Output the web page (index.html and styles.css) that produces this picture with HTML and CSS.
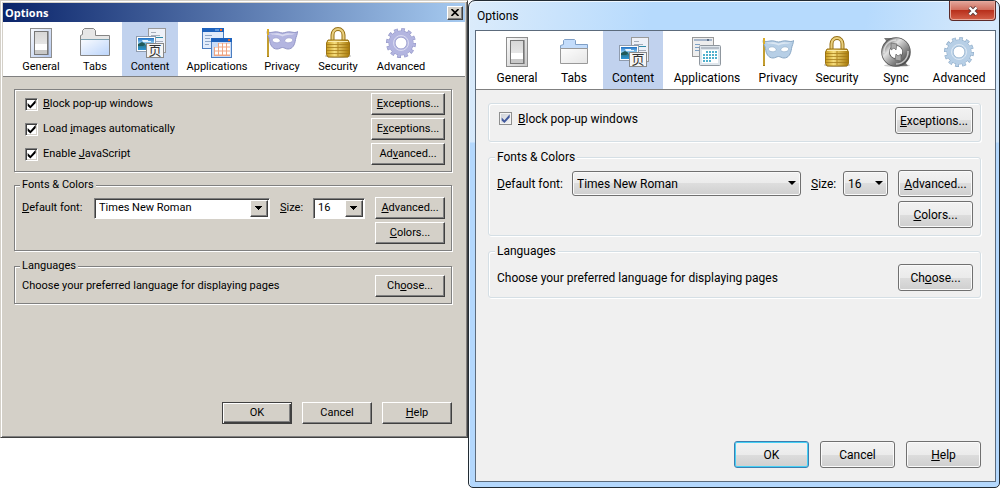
FILE: index.html
```html
<!DOCTYPE html>
<html lang="en">
<head>
    <meta charset="UTF-8">
    <meta name="viewport" content="width=device-width, initial-scale=1.0">
    <title>Options</title>
    <link rel="stylesheet" href="styles.css">
</head>
<body>

<!-- Shared icons, coloured per theme through CSS variables -->
<svg class="sprite" width="0" height="0" aria-hidden="true">
    <defs>
        <linearGradient id="shine" x1="0" y1="0" x2="1" y2="1">
            <stop offset="0" stop-color="#fff" stop-opacity=".9"/>
            <stop offset="1" stop-color="#fff" stop-opacity="0"/>
        </linearGradient>
        <linearGradient id="grey" x1="0" y1="0" x2="0" y2="1">
            <stop offset="0" stop-color="#d6d6d6"/>
            <stop offset="1" stop-color="#f2f2f2"/>
        </linearGradient>
        <linearGradient id="gold" x1="0" y1="0" x2="1" y2="0">
            <stop offset="0" stop-color="#c79a1c"/>
            <stop offset=".35" stop-color="#f6dd7c"/>
            <stop offset="1" stop-color="#a87908"/>
        </linearGradient>
        <linearGradient id="sky" x1="0" y1="0" x2="0" y2="1">
            <stop offset="0" stop-color="#1c6fc4"/>
            <stop offset=".5" stop-color="#a5dcf8"/>
            <stop offset=".6" stop-color="#2d7a8e"/>
            <stop offset="1" stop-color="#2b94d8"/>
        </linearGradient>
        <linearGradient id="steel" x1="0" y1="0" x2="1" y2="1">
            <stop offset="0" stop-color="#666"/>
            <stop offset=".3" stop-color="#e2e2e2"/>
            <stop offset=".6" stop-color="#999"/>
            <stop offset="1" stop-color="#444"/>
        </linearGradient>
    </defs>

    <symbol id="icon-general" viewBox="0 0 32 32">
        <rect x="5.5" y="1.5" width="21" height="29" style="fill: var(--plate)" stroke="#8e8e8e"/>
        <rect x="6" y="2" width="20" height="28" fill="url(#shine)"/>
        <path d="M10 28V5l14-1v24z" fill="#777" opacity=".6"/>
        <rect x="9.5" y="4.5" width="13" height="23" fill="url(#grey)" stroke="#777"/>
        <rect x="10" y="17" width="12" height="6" fill="#fff"/>
        <rect x="10" y="23" width="12" height="4" fill="#c8c8c8"/>
    </symbol>

    <symbol id="icon-tabs-classic" viewBox="0 0 32 32">
        <path d="M1.5 28.5V8.5l2-1V3.500l2-2h9l2 2v5h14v20z" fill="#e6e6e6" stroke="#858585"/>
        <path d="M2 13h28v15H2z" fill="#bcd5fb"/>
        <path d="M2 13h28v15H2z" fill="url(#shine)"/>
        <path d="M2 12.500h28" stroke="#7ba0b0"/>
    </symbol>

    <symbol id="icon-tabs-aero" viewBox="0 0 32 32">
        <path d="M2.500 12.500V9.500l3-1V4.500l1-1h10l1 1v4h12v4z" fill="#c3dcfb" stroke="#7f9fc6"/>
        <path d="M2.500 12.500h27v15h-27z" fill="#e6e6e6" stroke="#999"/>
        <path d="M3 13h26v14H3z" fill="url(#shine)"/>
    </symbol>

    <symbol id="icon-content" viewBox="0 0 32 32">
        <rect x="14.500" y="1.500" width="17" height="24" fill="#eef1f8" stroke="#999"/>
        <path d="M17 5.500h5M17 8.500h9M17 14.500h12" stroke="#a5adbb"/>
        <path d="M22 10.500h7" stroke="#2e8aa8"/>
        <rect x="2.500" y="9.500" width="19" height="15" fill="#fff" stroke="#909cae"/>
        <rect x="4" y="11" width="16" height="12" fill="url(#sky)"/>
        <path d="M4 17l4-2 4 2-3 2H4z" fill="#215a59"/>
        <path d="M8 13h6v1h3v1H9z" fill="#e6f4ff"/>
        <rect x="12.500" y="16.500" width="17" height="14" fill="#f5f5f5" stroke="#888"/>
    </symbol>

    <symbol id="icon-apps-classic" viewBox="0 0 32 32">
        <rect x="1.500" y="1.500" width="21" height="20" fill="#e2ecfb" stroke="#4b7dc0"/>
        <path d="M1 1h22v4H1z" fill="#1d62bd"/>
        <path d="M19 2h2v2h-2z" fill="#f06c28"/>
        <path d="M14 3h4" stroke="#9cc5f2"/>
        <path d="M4 8.500h7M4 11.500h5M4 14.500h6M4 17.500h4" stroke="#8ca6c8"/>
        <rect x="10.500" y="11.500" width="20" height="19" fill="#c9dcf8" stroke="#4b7dc0"/>
        <path d="M10 11h21v4H10z" fill="#1d62bd"/>
        <path d="M27 12h2v2h-2z" fill="#f06c28"/>
        <path d="M17 16h12v13H13v-9h4z" fill="#f0a582"/>
        <path d="M18 18h11M14 22h15M14 26h15" stroke="#fff" stroke-width="3" stroke-dasharray="3 1"/>
    </symbol>

    <symbol id="icon-apps-aero" viewBox="0 0 32 32">
        <rect x="1.500" y="1.500" width="21" height="19" fill="#eee" stroke="#999"/>
        <path d="M3 3h18v2H3z" fill="#a6b6cb"/>
        <path d="M16 3h2v2h-2z" fill="#5d7088"/>
        <path d="M4 8.500h5M4 11.500h4M4 14.500h5" stroke="#7da0c4"/>
        <rect x="8.500" y="9.500" width="21" height="20" rx="1" fill="#dfe6ec" stroke="#8f979f"/>
        <rect x="10" y="11" width="18" height="2" fill="#b5bec8"/>
        <rect x="11" y="14" width="16" height="13" fill="#fff"/>
        <path d="M15 16h12M12 19h15M12 22h15M12 25h9" stroke="#4fb0cd" stroke-width="2" stroke-dasharray="2 1"/>
    </symbol>

    <symbol id="icon-privacy" viewBox="0 0 32 32">
        <path d="M2 2v28" stroke="#a67c12" stroke-width="2"/>
        <path d="M2 3v26" stroke="#f0d060" stroke-width=".8"/>
        <path d="M1 4.500c2 1.500 4 1 7 .5 4-.8 6 1 8.500 1s4.500-1.800 8.500-1c3 .5 5 1 6.500-.5 0 3-1.500 5-2 8-.7 5.500-3 9.500-7.500 9.500-2.500 0-3.500-1.500-5.500-1.500S13.500 22 11 22c-4.500 0-7-4-7.500-9.500-.5-3-2.500-5-2.500-8z" style="fill: var(--tint); stroke: var(--tint-dark)"/>
        <path d="M4 6.500c3 .5 7-1.500 12.500 1C22 5 26 7 29 6.500c-2 2-8 .5-12.500 3C12 7 6 8.500 4 6.500z" fill="#fff" opacity=".5"/>
        <path d="M6 13c1.500-3 7-3 8.500 1-2 2.500-7 2.500-8.500-1zM18.500 14c1.500-4 7-4 8.500-1-1.500 3.500-6.500 3.500-8.500 1z" fill="#fff" style="stroke: var(--tint-dark)" stroke-width=".6"/>
        <path d="M2 2v6" stroke="#d9ad2c" stroke-width="2"/>
    </symbol>

    <symbol id="icon-security" viewBox="0 0 32 32">
        <ellipse cx="16" cy="29" rx="13" ry="2" fill="#777" opacity=".5"/>
        <path d="M10.500 14V8a5.500 6 0 0 1 11 0v6" fill="none" stroke="#967016" stroke-width="4"/>
        <path d="M10.500 14V8a5.500 6 0 0 1 11 0v6" fill="none" stroke="#e9cf7e" stroke-width="2"/>
        <path d="M6 13h20l1.500 3v11.500L26 30H6l-1.500-2.500V16z" fill="url(#gold)" stroke="#9b7416"/>
        <path d="M5 17.500h22M5 20.500h22M5 23.500h22M5 26.500h22" stroke="#a27918" opacity=".75"/>
        <path d="M16 14v15" stroke="#b28723"/>
        <path d="M6 14.500h20" stroke="#fbeaa8"/>
    </symbol>

    <symbol id="icon-sync" viewBox="0 0 32 32">
        <ellipse cx="17" cy="29.500" rx="13" ry="1.500" fill="#999" opacity=".5"/>
        <path d="M4 2h14v4H7zM28 30H14v-4h11z" fill="#777"/>
        <circle cx="16" cy="16" r="10.500" fill="none" stroke="#555" stroke-width="8.500"/>
        <circle cx="16" cy="16" r="10.500" fill="none" stroke="url(#steel)" stroke-width="7"/>
        <path d="M11 7l6 1-1 6-2-2-3 2zM21 25l-6-1 1-6 2 2 3-2z" fill="#aaa" stroke="#666" stroke-width=".7"/>
        <path d="M4 17A12 12 0 0 1 16 4M28 15a12 12 0 0 1-12 13" fill="none" stroke="#eee" stroke-width="1.500" opacity=".7"/>
    </symbol>

    <symbol id="icon-advanced" viewBox="0 0 32 32">
        <g fill="none">
            <circle cx="16" cy="16" r="12.500" pathLength="48" stroke-width="5" stroke-dasharray="2.200 1.800" style="stroke: var(--tint-dark)"/>
            <circle cx="16" cy="16" r="9" stroke-width="7" style="stroke: var(--tint-dark)"/>
            <circle cx="16" cy="16" r="12" pathLength="48" stroke-width="5" stroke-dasharray="1.600 2.400" stroke-dashoffset="-.3" style="stroke: var(--tint)"/>
            <circle cx="16" cy="16" r="9" stroke-width="6" style="stroke: var(--tint)"/>
            <circle cx="16" cy="16" r="7.500" stroke="#fff" opacity=".5"/>
        </g>
    </symbol>
</svg>

<main class="desktop">

    <!-- Windows 2000 style dialog -->
    <section class="window classic">
        <header class="titlebar">
            <h1>Options</h1>
            <button class="close" type="button" aria-label="Close">
                <svg width="8" height="7" viewBox="0 0 8 7"><path d="M.5 0l7 7M7.500 0l-7 7" stroke="#000" stroke-width="1.600"/></svg>
            </button>
        </header>
        <nav class="toolbar">
            <button type="button"><svg><use href="#icon-general"/></svg>General</button>
            <button type="button"><svg><use href="#icon-tabs-classic"/></svg>Tabs</button>
            <button type="button" class="active"><svg><use href="#icon-content"/><text class="glyph" x="21" y="28" text-anchor="middle">页</text></svg>Content</button>
            <button type="button"><svg><use href="#icon-apps-classic"/></svg>Applications</button>
            <button type="button"><svg><use href="#icon-privacy"/></svg>Privacy</button>
            <button type="button"><svg><use href="#icon-security"/></svg>Security</button>
            <button type="button"><svg><use href="#icon-advanced"/></svg>Advanced</button>
        </nav>
        <form class="pane">
            <fieldset class="checks">
                <div class="row">
                    <label><input type="checkbox" checked><span><u>B</u>lock pop-up windows</span></label>
                    <button type="button" class="btn wide"><u>E</u>xceptions...</button>
                </div>
                <div class="row">
                    <label><input type="checkbox" checked><span>Load <u>i</u>mages automatically</span></label>
                    <button type="button" class="btn wide">E<u>x</u>ceptions...</button>
                </div>
                <div class="row">
                    <label><input type="checkbox" checked><span>Enable <u>J</u>avaScript</span></label>
                    <button type="button" class="btn wide">Ad<u>v</u>anced...</button>
                </div>
            </fieldset>
            <fieldset class="fonts">
                <legend>Fonts &amp; Colors</legend>
                <div class="font-grid">
                    <label for="classicFont"><u>D</u>efault font:</label>
                    <span class="select"><select id="classicFont"><option>Times New Roman</option></select></span>
                    <label for="classicSize"><u>S</u>ize:</label>
                    <span class="select"><select id="classicSize"><option>16</option></select></span>
                    <button type="button" class="btn"><u>A</u>dvanced...</button>
                    <button type="button" class="btn last"><u>C</u>olors...</button>
                </div>
            </fieldset>
            <fieldset class="languages">
                <legend>Languages</legend>
                <div class="row">
                    <span>Choose your preferred language for displaying pages</span>
                    <button type="button" class="btn">Ch<u>o</u>ose...</button>
                </div>
            </fieldset>
            <div class="actions">
                <button type="submit" class="btn default">OK</button>
                <button type="button" class="btn">Cancel</button>
                <button type="button" class="btn"><u>H</u>elp</button>
            </div>
        </form>
    </section>

    <!-- Windows 7 style dialog -->
    <section class="window aero">
        <header class="titlebar">
            <h1>Options</h1>
            <button class="close" type="button" aria-label="Close">
                <svg width="12" height="10" viewBox="0 0 12 10"><path d="M2.500 1.500l7 7M9.500 1.500l-7 7" stroke="#5a3a3a" stroke-width="4"/><path d="M2.500 1.500l7 7M9.500 1.500l-7 7" stroke="#fff" stroke-width="2.400"/></svg>
            </button>
        </header>
        <div class="client">
            <nav class="toolbar">
                <button type="button"><svg><use href="#icon-general"/></svg>General</button>
                <button type="button"><svg><use href="#icon-tabs-aero"/></svg>Tabs</button>
                <button type="button" class="active"><svg><use href="#icon-content"/><text class="glyph" x="21" y="28" text-anchor="middle">页</text></svg>Content</button>
                <button type="button"><svg><use href="#icon-apps-aero"/></svg>Applications</button>
                <button type="button"><svg><use href="#icon-privacy"/></svg>Privacy</button>
                <button type="button"><svg><use href="#icon-security"/></svg>Security</button>
                <button type="button"><svg><use href="#icon-sync"/></svg>Sync</button>
                <button type="button"><svg><use href="#icon-advanced"/></svg>Advanced</button>
            </nav>
            <form class="pane">
                <fieldset class="checks">
                    <div class="row">
                        <label><input type="checkbox" checked><span><u>B</u>lock pop-up windows</span></label>
                        <button type="button" class="btn wide"><u>E</u>xceptions...</button>
                    </div>
                </fieldset>
                <fieldset class="fonts">
                    <legend>Fonts &amp; Colors</legend>
                    <div class="font-grid">
                        <label for="aeroFont"><u>D</u>efault font:</label>
                        <span class="select"><select id="aeroFont"><option>Times New Roman</option></select></span>
                        <label for="aeroSize"><u>S</u>ize:</label>
                        <span class="select"><select id="aeroSize"><option>16</option></select></span>
                        <button type="button" class="btn"><u>A</u>dvanced...</button>
                        <button type="button" class="btn last"><u>C</u>olors...</button>
                    </div>
                </fieldset>
                <fieldset class="languages">
                    <legend>Languages</legend>
                    <div class="row">
                        <span>Choose your preferred language for displaying pages</span>
                        <button type="button" class="btn">Ch<u>o</u>ose...</button>
                    </div>
                </fieldset>
                <div class="actions">
                    <button type="submit" class="btn default">OK</button>
                    <button type="button" class="btn">Cancel</button>
                    <button type="button" class="btn"><u>H</u>elp</button>
                </div>
            </form>
        </div>
    </section>

</main>

</body>
</html>
```
FILE: styles.css
```css
* {
    box-sizing: border-box;
}
body {
    margin: 0;
    background-color: #fff;
    color: #000;
}
button, input, select {
    margin: 0;
    padding: 0;
    font: inherit;
    color: inherit;
}
u {
    text-decoration-thickness: 1px;
    text-underline-offset: 1px;
}
.sprite {
    position: absolute;
}
.glyph {
    font: 13px "Noto Sans CJK SC", sans-serif;
    fill: #333;
}
.desktop {
    display: grid;
    grid-template-columns: 469fr 531fr;
    align-items: start;
    min-height: 100vh;
}
.window {
    display: flex;
    flex-direction: column;
}
.titlebar {
    display: flex;
    justify-content: space-between;
}
.close {
    display: flex;
    align-items: center;
    justify-content: center;
}

/* Toolbar */
.toolbar {
    display: grid;
    background-color: #fff;
}
.toolbar button {
    display: flex;
    flex-direction: column;
    align-items: center;
    border: 0;
    background: none;
    white-space: nowrap;
}
.toolbar .active {
    background-color: #c1d2ee;
}
.toolbar svg {
    width: 32px;
    height: 32px;
}

/* Shared form layout */
.pane {
    display: flex;
    flex-direction: column;
    flex: 1;
}
fieldset {
    margin: 0;
    min-width: 0;
}
label {
    white-space: nowrap;
}
.row {
    display: flex;
    align-items: center;
    justify-content: space-between;
}
.row label {
    display: flex;
    align-items: center;
}
input[type="checkbox"] {
    appearance: none;
    width: 13px;
    height: 13px;
}
input[type="checkbox"]:checked::before {
    content: "";
    display: block;
    height: 100%;
    background-color: #000;
    clip-path: polygon(15% 40%, 40% 65%, 88% 12%, 88% 42%, 40% 92%, 15% 68%);
}
.font-grid {
    display: grid;
    align-items: center;
}
.font-grid .last {
    grid-column: 5;
}
.select {
    position: relative;
    display: flex;
}
.select select {
    appearance: none;
    width: 100%;
}
.select::after {
    content: "";
    position: absolute;
    pointer-events: none;
}
.actions {
    display: flex;
    justify-content: flex-end;
}

/* Classic theme */
.classic {
    --plate: #b4c8ee;
    --tint: #b3b5e0;
    --tint-dark: #9295c6;
    padding: 1px;
    border: 1px solid #404040;
    border-top-color: #d4d0c8;
    border-left-color: #d4d0c8;
    box-shadow: inset 1px 1px 0 #fff, inset -1px -1px 0 #808080;
    background-color: #d4d0c8;
    font: 11px/14px Roboto, sans-serif;
}
.classic .titlebar {
    align-items: center;
    height: 19px;
    margin: 1px 1px 0;
    padding: 0 2px;
    background: linear-gradient(to right, #0a246a, #a6caf0);
}
.classic h1 {
    margin: 0;
    font: bold 11px/16px "Open Sans", sans-serif;
    color: #fff;
}
.classic .close {
    width: 16px;
    height: 14px;
}
.classic .close, .classic .btn {
    border: 1px solid #404040;
    border-top-color: #fff;
    border-left-color: #fff;
    box-shadow: inset -1px -1px 0 #808080;
    background-color: #d4d0c8;
}
.classic .toolbar {
    grid-template-columns: 54px 54px 56px 78px 52px 60px 66px;
    height: 55px;
    margin: 0 1px;
    padding-left: 11px;
    border-bottom: 1px solid #808080;
}
.classic .toolbar button {
    padding-top: 5px;
    gap: 1px;
}
.classic .pane {
    padding: 12px 14px 12px 12px;
}
.classic fieldset {
    border: 1px solid #808080;
    box-shadow: 1px 1px 0 #fff, inset 1px 1px 0 #fff;
}
.classic legend {
    margin-left: -2px;
    padding: 0 2px;
    background-color: #d4d0c8;
}
.classic .btn {
    width: 70px;
    height: 22px;
}
.classic .btn.wide {
    width: 74px;
}
.classic .btn.default {
    border: 1px solid #404040;
    box-shadow: inset 1px 1px 0 #fff, inset -1px -1px 0 #404040, inset -2px -2px 0 #808080;
}
.classic .checks {
    display: flex;
    flex-direction: column;
    gap: 3px;
    padding: 3px 6px 6px 10px;
}
.classic .row label {
    gap: 5px;
}
.classic input[type="checkbox"] {
    border: 1px solid #fff;
    border-top-color: #808080;
    border-left-color: #808080;
    box-shadow: inset 1px 1px 0 #404040, inset -1px -1px 0 #d4d0c8;
    background-color: #fff;
}
.classic .fonts {
    margin-top: 6px;
    padding: 5px 6px 6px 7px;
}
.classic .font-grid {
    grid-template-columns: 62px 1fr 23px 52px 70px;
    gap: 3px 10px;
}
.classic .select select {
    height: 21px;
    padding-left: 4px;
    border: 1px solid #fff;
    border-top-color: #808080;
    border-left-color: #808080;
    border-radius: 0;
    box-shadow: inset 1px 1px 0 #404040;
    background-color: #fff;
}
.classic .select::after {
    top: 2px;
    right: 2px;
    bottom: 2px;
    width: 16px;
    border: 1px solid #404040;
    border-top-color: #fff;
    border-left-color: #fff;
    box-shadow: inset -1px -1px 0 #808080;
    background: linear-gradient(#000, #000) 4px 5px / 7px 1px no-repeat, linear-gradient(#000, #000) 5px 6px / 5px 1px no-repeat, linear-gradient(#000, #000) 6px 7px / 3px 1px no-repeat, linear-gradient(#000, #000) 7px 8px / 1px 1px no-repeat #d4d0c8;
}
.classic .languages {
    margin-top: 8px;
    padding: 2px 6px 6px 7px;
}
.classic .actions {
    gap: 10px;
    margin-top: 98px;
}

/* Aero theme */
.aero {
    --plate: #c9c9c9;
    --tint: #b7cfe6;
    --tint-dark: #8aa8c5;
    min-height: 100vh;
    padding: 0 3px 5px 6px;
    border: 1px solid #222b33;
    border-radius: 7px 7px 5px 5px;
    box-shadow: inset 1px 1px 0 #eef7ff;
    background: linear-gradient(to bottom, transparent 141px, #b4d8fd 142px), linear-gradient(100deg, #dcecfb, #b6dafd 30%, #b6dafd 65%, #d6e9fb 85%, #c4e0fb);
    font: 12px/16px Roboto, sans-serif;
}
.aero .titlebar {
    height: 29px;
    padding-left: 2px;
}
.aero h1 {
    margin: 7px 0 0;
    font: 12px/16px Roboto, sans-serif;
}
.aero .close {
    width: 47px;
    height: 20px;
    border: 1px solid #5c2a28;
    border-top: 0;
    border-radius: 0 0 4px 4px;
    box-shadow: inset 0 0 0 1px #e8a99c;
    background: linear-gradient(#e2a79c, #d1705f 45%, #b8301c 50%, #d4614a);
}
.aero .client {
    display: flex;
    flex-direction: column;
    flex: 1;
    border: 1px solid #5c6b7c;
    background-color: #f0f0f0;
}
.aero .toolbar {
    grid-template-columns: 56px 58px 60px 88px 54px 64px 54px 72px;
    height: 59px;
    padding-left: 13px;
    border-bottom: 1px solid #808080;
}
.aero .toolbar button {
    padding-top: 5px;
    gap: 2px;
}
.aero .pane {
    padding: 13px 14px 13px 12px;
}
.aero fieldset {
    border: 1px solid #d5dfe5;
    border-radius: 3px;
    box-shadow: 1px 1px 0 #fff, inset 1px 1px 0 #fff;
}
.aero legend {
    margin-left: -2px;
    padding: 0 2px;
    background-color: #f0f0f0;
}
.aero .btn, .aero .select select {
    border: 1px solid #707070;
    border-radius: 3px;
    box-shadow: inset 0 0 0 1px #fafafa;
    background: linear-gradient(#f2f2f2, #ebebeb 50%, #dddddd 50%, #cfcfcf);
}
.aero .btn {
    width: 75px;
    height: 27px;
}
.aero .btn.wide {
    width: 78px;
}
.aero .btn.default {
    border-color: #3c7fb1;
    box-shadow: inset 0 0 0 1px #45d0f5;
}
.aero .checks {
    padding: 3px 7px 7px 10px;
}
.aero .row label {
    gap: 6px;
    margin-bottom: 4px;
}
.aero input[type="checkbox"] {
    border: 1px solid #8e8f8f;
    box-shadow: inset 0 0 0 1px #f4f4f4;
    background: linear-gradient(135deg, #cbcfd5, #f6f6f6);
}
.aero input[type="checkbox"]::before {
    background-color: #42599d;
}
.aero .fonts {
    margin-top: 7px;
    padding: 5px 7px 7px 8px;
}
.aero .font-grid {
    grid-template-columns: 65px 1fr 22px 45px 75px;
    gap: 4px 10px;
}
.aero .select select {
    height: 25px;
    padding-left: 4px;
}
.aero .select::after {
    top: 10px;
    right: 5px;
    border: 4px solid transparent;
    border-top-color: #000;
    border-bottom: 0;
}
.aero .languages {
    margin-top: 7px;
    padding: 5px 7px 6px 8px;
}
.aero .actions {
    gap: 11px;
    margin-top: auto;
}
```
